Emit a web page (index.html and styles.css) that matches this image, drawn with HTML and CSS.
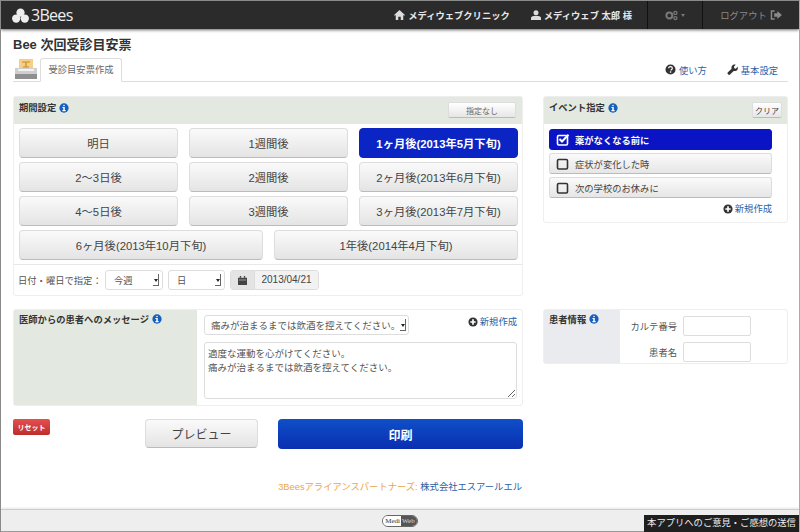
FILE: index.html
```html
<!DOCTYPE html>
<html>
<head>
    <title>3Bees</title>
    <link rel="stylesheet" href="styles.css">
</head>
<body>
    <svg class="icon-defs" width="0" height="0">
        <symbol id="i-info" viewBox="0 0 14 14">
            <circle cx="7" cy="7" r="6.5" fill="#1560bd"/>
            <rect x="5.9" y="2.4" width="2.2" height="2.2" rx="1" fill="#fff"/>
            <path d="M4.8 5.6h3.3v4.3h1.2v1.5H4.8V9.9H6V7.1H4.8z" fill="#fff"/>
        </symbol>
        <symbol id="i-plus" viewBox="0 0 12 12">
            <circle cx="6" cy="6" r="5.5" fill="#333"/>
            <path d="M5 2.8h2V5h2.2v2H7v2.2H5V7H2.8V5H5z" fill="#fff"/>
        </symbol>
        <symbol id="i-box" viewBox="0 0 14 14">
            <rect x="1.5" y="2.5" width="10" height="9.5" rx="1.2" fill="none" stroke="currentColor" stroke-width="1.6"/>
        </symbol>
    </svg>

    <!-- Top bar -->
    <header class="main-header">
        <div class="header-brand">
            <svg width="17" height="15" viewBox="0 0 18 16"><circle cx="9" cy="5" r="4.4" fill="#eee"/><circle cx="4.4" cy="11.2" r="4.4" fill="#eee"/><circle cx="13.6" cy="11.2" r="4.4" fill="#eee"/></svg>
            <span>3Bees</span>
        </div>
        <nav class="header-nav">
            <span class="nav-item">
                <svg width="11" height="10" viewBox="0 0 13 12"><path d="M6.5 0 13 6l-.8.9-1.2-1V12H8V8H5v4H2V5.9L.8 6.9 0 6z" fill="#ddd"/></svg>
                メディウェブクリニック
            </span>
            <span class="nav-item">
                <svg width="10" height="10" viewBox="0 0 12 12"><circle cx="6" cy="3.4" r="3" fill="#ddd"/><path d="M0 12V9.5C0 8 2.5 7 6 7s6 1 6 2.5V12z" fill="#ddd"/></svg>
                メディウェブ 太郎 様
            </span>
            <span class="nav-tool">
                <svg width="13" height="11" viewBox="0 0 15 12"><circle cx="5" cy="6" r="3.4" fill="none" stroke="#777" stroke-width="2.4"/><circle cx="12" cy="3" r="1.8" fill="none" stroke="#777" stroke-width="1.5"/><circle cx="12" cy="9" r="1.8" fill="none" stroke="#777" stroke-width="1.5"/></svg>
                <i class="caret"></i>
            </span>
            <span class="nav-logout">
                ログアウト
                <svg width="12" height="10" viewBox="0 0 13 11"><path d="M5 1H1.5v9H5" fill="none" stroke="#8a8a8a" stroke-width="1.6"/><path d="M4.5 3.700h3.5V1l5 4.500-5 4.500V7.300H4.500z" fill="#8a8a8a"/></svg>
            </span>
        </nav>
    </header>

    <main class="content">
        <h1 class="page-title">Bee 次回受診目安票</h1>

        <div class="tab-bar">
            <svg class="tab-icon" width="22" height="20" viewBox="0 0 22 20">
                <rect x="4" y="0" width="14" height="11" fill="#f6cf86"/>
                <path d="M7 3h8M11 3v5M8 8h6" stroke="#c98a2a" stroke-width="1.2" fill="none"/>
                <path d="M0 9h22v7H0z" fill="#cfcfcf"/>
                <rect x="0" y="15" width="22" height="5" fill="#8f8f8f"/>
                <rect x="3" y="10" width="16" height="2" fill="#f2f2f2"/>
            </svg>
            <div class="tab">受診目安票作成</div>
            <div class="tab-links">
                <a href="#">
                    <svg width="11" height="11" viewBox="0 0 12 12"><circle cx="6" cy="6" r="5.5" fill="#333"/><path d="M4 4.500C4 3.400 4.900 2.800 6 2.800s2 .7 2 1.700c0 1.400-1.500 1.400-1.500 2.500" fill="none" stroke="#fff" stroke-width="1.3"/><rect x="5.3" y="8" width="1.5" height="1.5" fill="#fff"/></svg>
                    使い方
                </a>
                <a href="#">
                    <svg width="11" height="11" viewBox="0 0 12 12"><path d="M1 11c-.7-.7-.6-1.300 0-1.900l4-3.900C4.500 3.500 5 1.800 6.500 1c1-.5 2-.5 3-.1L7.500 3l.5 1.600 1.600.5 2-2.100c.4 1 .4 2-.1 3-.8 1.500-2.500 2-4.200 1.500l-4 4c-.6.600-1.200.7-1.900 0z" fill="#333"/></svg>
                    基本設定
                </a>
            </div>
        </div>

        <div class="layout">
            <section class="panel period">
                <div class="panel-head">
                    <span class="head-title">期間設定 <svg class="info"><use href="#i-info"/></svg></span>
                    <button class="small-btn wide">指定なし</button>
                </div>
                <div class="choice-grid">
                    <button class="choice">明日</button>
                    <button class="choice">1週間後</button>
                    <button class="choice selected">1ヶ月後(2013年5月下旬)</button>
                    <button class="choice">2～3日後</button>
                    <button class="choice">2週間後</button>
                    <button class="choice">2ヶ月後(2013年6月下旬)</button>
                    <button class="choice">4～5日後</button>
                    <button class="choice">3週間後</button>
                    <button class="choice">3ヶ月後(2013年7月下旬)</button>
                </div>
                <div class="choice-grid two">
                    <button class="choice">6ヶ月後(2013年10月下旬)</button>
                    <button class="choice">1年後(2014年4月下旬)</button>
                </div>
                <div class="date-row">
                    <span class="date-label">日付・曜日で指定：</span>
                    <div class="pick week"><span>今週</span><i class="pick-arrow"></i></div>
                    <div class="pick day"><span>日</span><i class="pick-arrow"></i></div>
                    <div class="date-field">
                        <span class="date-icon">
                            <svg width="9" height="9" viewBox="0 0 10 10"><path d="M0 2h10v8H0z" fill="#444"/><path d="M2 0h1.500v2H2zM6.500 0H8v2H6.500z" fill="#444"/><path d="M1 4h8v1H1z" fill="#999"/></svg>
                        </span>
                        <span class="date-value">2013/04/21</span>
                    </div>
                </div>
            </section>

            <section class="panel event">
                <div class="panel-head">
                    <span class="head-title">イベント指定 <svg class="info"><use href="#i-info"/></svg></span>
                    <button class="small-btn">クリア</button>
                </div>
                <div class="event-list">
                    <div class="event-item checked">
                        <svg width="14" height="14" viewBox="0 0 14 14"><use href="#i-box"/><path d="M3.500 6 6 8.500 12.500 1.800" fill="none" stroke="#fff" stroke-width="2"/></svg>
                        薬がなくなる前に
                    </div>
                    <div class="event-item"><svg width="14" height="14"><use href="#i-box"/></svg>症状が変化した時</div>
                    <div class="event-item"><svg width="14" height="14"><use href="#i-box"/></svg>次の学校のお休みに</div>
                    <a class="new-link" href="#"><svg width="10" height="10"><use href="#i-plus"/></svg>新規作成</a>
                </div>
            </section>

            <section class="panel side-panel message">
                <div class="side-label">医師からの患者へのメッセージ <svg class="info"><use href="#i-info"/></svg></div>
                <div class="message-body">
                    <div class="message-top">
                        <div class="pick template"><span>痛みが治まるまでは飲酒を控えてください。</span><i class="pick-arrow"></i></div>
                        <a class="new-link" href="#"><svg width="10" height="10"><use href="#i-plus"/></svg>新規作成</a>
                    </div>
                    <textarea class="message-text">適度な運動を心がけてください。
痛みが治まるまでは飲酒を控えてください。</textarea>
                </div>
            </section>

            <section class="panel side-panel patient">
                <div class="side-label grey">患者情報 <svg class="info"><use href="#i-info"/></svg></div>
                <div class="patient-form">
                    <label for="chart-no">カルテ番号</label>
                    <input type="text" id="chart-no">
                    <label for="patient-name">患者名</label>
                    <input type="text" id="patient-name">
                </div>
            </section>

            <div class="actions">
                <button class="reset-btn">リセット</button>
                <button class="preview-btn">プレビュー</button>
                <button class="print-btn">印刷</button>
            </div>
        </div>

        <p class="partners">3Beesアライアンスパートナーズ: <a href="#">株式会社エスアールエル</a></p>
    </main>

    <footer class="main-footer">
        <div class="medi-logo"><span>Medi</span><span class="dark">Web</span></div>
        <div class="feedback">本アプリへのご意見・ご感想の送信</div>
    </footer>
</body>
</html>
```

FILE: styles.css
```css
* {
    margin: 0;
    padding: 0;
    box-sizing: border-box;
    font-family: "Liberation Sans", "Noto Sans CJK JP", sans-serif;
}

html, body {
    height: 532px;
    overflow: hidden;
}

body {
    display: flex;
    flex-direction: column;
    position: relative;
    background: white;
    color: #444;
    font-size: 9.3px;
    border-top: 1px solid #8a8a8a;
    border-left: 1px solid #8a8a8a;
    border-right: 1px solid #aaa;
}

a {
    color: #2a62a8;
    text-decoration: none;
}

.icon-defs {
    position: absolute;
}

/* Top bar */
.main-header {
    height: 28px;
    flex: none;
    background: #2b2b2b;
    display: flex;
    justify-content: space-between;
    align-items: center;
    padding-left: 11px;
    box-shadow: 0 1px 3px rgba(0, 0, 0, 0.6);
    z-index: 2;
}

.header-brand {
    display: flex;
    align-items: center;
    gap: 2px;
    color: #eee;
}

.header-brand span {
    font-family: "Open Sans", sans-serif;
    font-size: 16px;
    letter-spacing: -0.7px;
}

.header-nav {
    display: flex;
    align-items: stretch;
    height: 28px;
    color: #e8e8e8;
    font-weight: bold;
}

.nav-item {
    display: flex;
    align-items: center;
    gap: 3px;
    margin-right: 21px;
}

.nav-item:nth-child(2) {
    margin-right: 15px;
}

.nav-tool {
    width: 56px;
    display: flex;
    align-items: center;
    justify-content: center;
    gap: 3px;
    border-left: 1px solid #111;
    border-right: 1px solid #111;
}

.caret {
    border-top: 3px solid #777;
    border-left: 2.5px solid transparent;
    border-right: 2.5px solid transparent;
}

.nav-logout {
    width: 96px;
    display: flex;
    align-items: center;
    justify-content: center;
    gap: 3px;
    color: #8a8a8a;
    font-weight: normal;
}

/* Page */
.content {
    flex: 1;
    padding: 0 11px 0 12px;
}

.page-title {
    color: #333;
    font-size: 13px;
    font-weight: bold;
    line-height: 14px;
    margin-top: 9px;
}

.tab-bar {
    display: flex;
    align-items: flex-end;
    height: 24px;
    margin-top: 6px;
    border-bottom: 1px solid #ddd;
}

.tab-icon {
    margin: 0 3px 2px 2px;
}

.tab {
    width: 82px;
    height: 24px;
    margin-bottom: -1px;
    background: white;
    border: 1px solid #ddd;
    border-bottom: 1px solid white;
    border-radius: 3px 3px 0 0;
    text-align: center;
    line-height: 23px;
    color: #666;
}

.tab-links {
    margin-left: auto;
    margin-right: 10px;
    display: flex;
    gap: 20px;
    height: 23px;
    align-items: center;
}

.tab-links a {
    display: flex;
    align-items: center;
    gap: 3px;
}

.layout {
    display: grid;
    grid-template-columns: 510px 245px;
    column-gap: 20px;
    margin-top: 14px;
}

.panel {
    background: white;
    border: 1px solid #eee;
    border-radius: 3px;
}

.panel-head {
    height: 27px;
    background: #e3e9e0;
    display: flex;
    justify-content: space-between;
    align-items: flex-start;
    padding: 4px 6px 0 5px;
}

.event .panel-head {
    padding-right: 5px;
}

.head-title {
    display: flex;
    align-items: center;
    gap: 3px;
    color: #333;
    font-weight: bold;
    line-height: 14px;
}

.info {
    width: 10px;
    height: 10px;
    vertical-align: -1px;
}

.small-btn {
    height: 16px;
    width: 30px;
    margin-top: 1px;
    background: linear-gradient(#fff, #e6e6e6);
    border: 1px solid #ddd;
    border-bottom-color: #bbb;
    border-radius: 2px;
    color: #444;
    font-size: 8px;
}

.small-btn.wide {
    width: 68px;
    color: #666;
}

/* Period buttons */
.period {
    height: 200px;
}

.choice-grid {
    display: grid;
    grid-template-columns: repeat(3, 1fr);
    gap: 4px 11px;
    padding: 4px 4px 0 5px;
}

.choice-grid.two {
    grid-template-columns: repeat(2, 1fr);
    padding-bottom: 4px;
    border-bottom: 1px solid #e8e8e8;
}

.choice {
    height: 30px;
    background: linear-gradient(#fafafa, #e4e4e4);
    border: 1px solid #ddd;
    border-bottom-color: #bbb;
    border-radius: 4px;
    color: #444;
    font-size: 11.3px;
}

.choice.selected {
    background: #0a25c4;
    border-color: #0a25c4;
    color: white;
    font-weight: bold;
}

.date-row {
    display: flex;
    align-items: center;
    height: 30px;
    padding-left: 4px;
    gap: 5px;
    color: #555;
}

.date-label {
    width: 82px;
    flex: none;
    white-space: nowrap;
}

.pick {
    height: 20px;
    display: flex;
    align-items: center;
    justify-content: space-between;
    padding: 0 3px 0 8px;
    background: white;
    border: 1px solid #ddd;
    border-radius: 3px;
    color: #555;
}

.pick.week {
    width: 58px;
}

.pick.day {
    width: 57px;
}

.pick-arrow {
    width: 6px;
    height: 12px;
    flex: none;
    position: relative;
    border-right: 1px solid #666;
    border-bottom: 1px solid #666;
}

.pick-arrow::after {
    content: '';
    position: absolute;
    top: 5px;
    left: 1px;
    border-top: 3px solid #222;
    border-left: 2px solid transparent;
    border-right: 2px solid transparent;
}

.date-field {
    display: flex;
    height: 20px;
    border: 1px solid #ddd;
    border-radius: 3px;
    overflow: hidden;
    color: #444;
}

.date-icon {
    width: 24px;
    background: #e4e4e4;
    display: flex;
    align-items: center;
    justify-content: center;
    border-right: 1px solid #ddd;
}

.date-value {
    width: 63px;
    background: #f2f2f2;
    text-align: center;
    font-size: 10px;
    line-height: 18px;
}

/* Event list */
.event {
    height: 127px;
}

.event-list {
    display: flex;
    flex-direction: column;
    gap: 3px;
    margin: 5px 15px 0 5px;
}

.event-item {
    height: 21px;
    display: flex;
    align-items: center;
    gap: 5px;
    padding-left: 6px;
    background: linear-gradient(#fafafa, #e6e6e6);
    border: 1px solid #ddd;
    border-bottom-color: #bbb;
    border-radius: 3px;
    color: #444;
}

.event-item svg {
    color: #333;
}

.event-item.checked {
    background: #0a14c4;
    border-color: #0a14c4;
    color: white;
    font-weight: bold;
}

.event-item.checked svg {
    color: white;
}

.new-link {
    display: flex;
    align-items: center;
    justify-content: flex-end;
    gap: 2px;
    line-height: 14px;
}

.event .new-link {
    margin-top: 1px;
}

/* Message and patient */
.side-panel {
    display: flex;
    margin-top: 13px;
}

.message {
    height: 97px;
}

.patient {
    height: 55px;
}

.side-label {
    width: 183px;
    flex: none;
    padding: 3px 5px;
    background: #e3e9e0;
    color: #333;
    font-weight: bold;
    line-height: 14px;
}

.side-label.grey {
    width: 76px;
    background: #e9ebee;
}

.message-body {
    flex: 1;
    padding: 5px 5px 0 7px;
}

.message-top {
    display: flex;
    justify-content: space-between;
    align-items: flex-start;
}

.pick.template {
    width: 205px;
    padding-left: 6px;
    font-size: 9.500px;
}

.template span {
    white-space: nowrap;
}

.message-text {
    display: block;
    width: 313px;
    height: 57px;
    margin-top: 7px;
    padding: 4px 3px;
    border: 1px solid #ddd;
    border-radius: 3px;
    color: #555;
    font-size: 9.500px;
    line-height: 14px;
}

.patient-form {
    display: grid;
    grid-template-columns: 57px 68px;
    column-gap: 6px;
    row-gap: 3px;
    align-items: center;
    padding-top: 5px;
    color: #555;
}

.patient-form label {
    text-align: right;
}

.patient-form input {
    height: 20px;
    width: 68px;
    border: 1px solid #ddd;
    border-radius: 2px;
}

/* Bottom actions */
.actions {
    display: flex;
    align-items: flex-start;
    margin-top: 13px;
}

.reset-btn {
    width: 37px;
    height: 16px;
    background: linear-gradient(#e5504f, #bd2c2b);
    border: none;
    border-radius: 2px;
    color: white;
    font-size: 7px;
    font-weight: bold;
}

.preview-btn {
    width: 113px;
    height: 29px;
    margin-left: 95px;
    background: linear-gradient(#fafafa, #e4e4e4);
    border: 1px solid #ddd;
    border-bottom-color: #bbb;
    border-radius: 4px;
    color: #444;
    font-size: 12px;
}

.print-btn {
    width: 245px;
    height: 30px;
    margin-left: 20px;
    background: linear-gradient(#0f4fc8, #0a2fb0);
    border: none;
    border-radius: 4px;
    color: white;
    font-size: 12px;
    font-weight: bold;
}

.partners {
    width: 509px;
    margin-top: 32px;
    text-align: right;
    color: #eca54a;
    line-height: 12px;
}

/* Footer */
.main-footer {
    height: 23px;
    flex: none;
    background: #eee;
    border-top: 1px solid #ccc;
    box-shadow: 0 -1px 2px rgba(0, 0, 0, 0.1);
    border-bottom: 1px solid #999;
    display: flex;
    justify-content: center;
    align-items: center;
}

.medi-logo {
    display: flex;
    height: 12px;
    border: 1px solid #666;
    border-radius: 6px;
    overflow: hidden;
    line-height: 10px;
}

.medi-logo span {
    padding: 0 1px 0 2px;
    font-family: "Liberation Serif", serif;
    font-size: 7px;
    background: white;
    color: #333;
}

.medi-logo .dark {
    background: #555;
    color: #ddd;
    padding: 0 2px 0 1px;
}

.feedback {
    position: absolute;
    right: 0;
    bottom: 0;
    width: 155px;
    height: 17px;
    background: #1f1f1f;
    color: #eee;
    line-height: 17px;
    text-align: center;
    white-space: nowrap;
}
```
